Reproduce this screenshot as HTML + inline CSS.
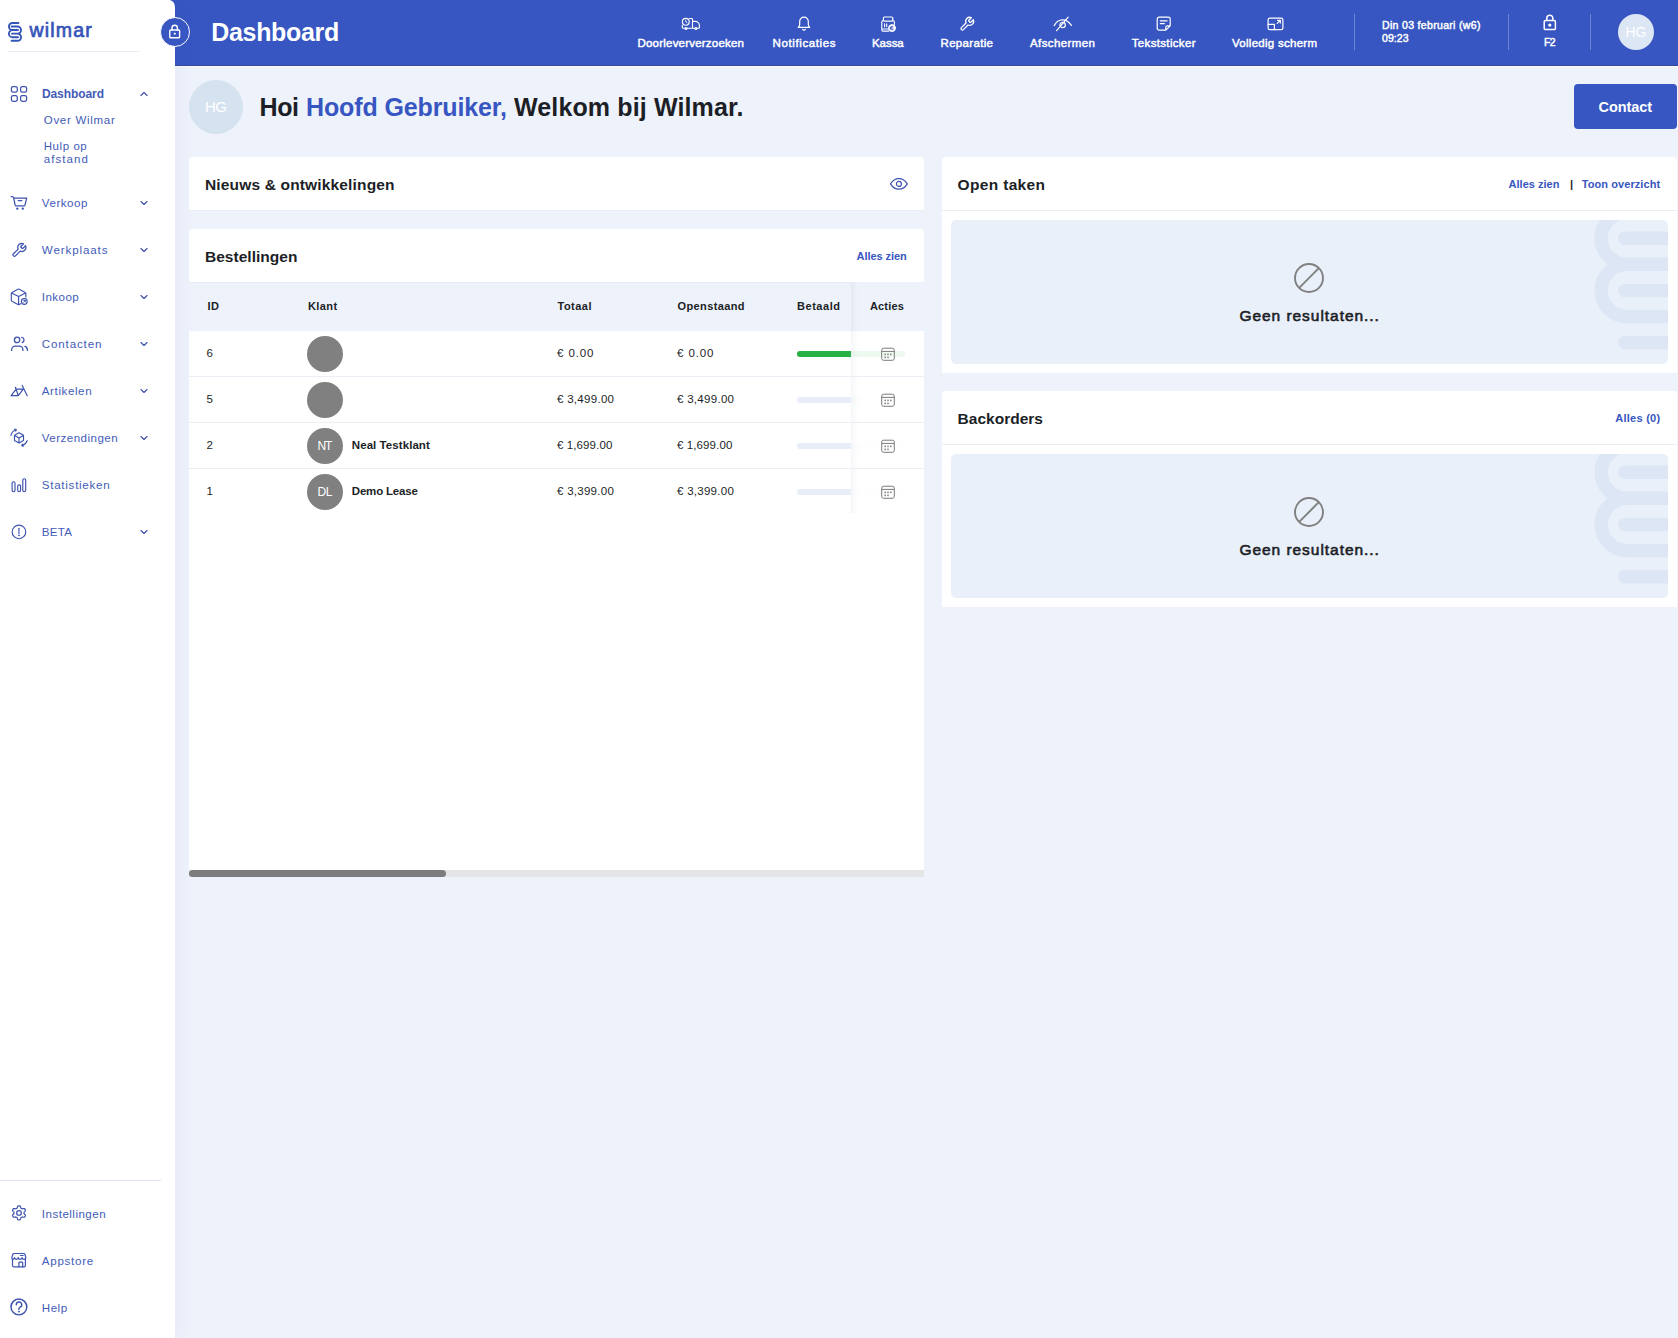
<!DOCTYPE html>
<html lang="nl">
<head>
<meta charset="utf-8">
<title>Dashboard - Wilmar</title>
<style>
*{box-sizing:border-box;margin:0;padding:0}
html,body{width:1678px;height:1338px;overflow:hidden;background:#eef2fb;font-family:"Liberation Sans",sans-serif;}
.t{position:absolute;white-space:nowrap;display:block}
svg{position:absolute;overflow:visible}
#sidebar,#header,#main{position:absolute;left:0;top:0;width:0;height:0}
.sb-bg{position:absolute;left:0;top:0;width:175px;height:1338px;background:#fff;border-top-right-radius:6px 7px;box-shadow:0 0 24px rgba(60,80,150,0.065)}
.hd-bg{position:absolute;left:170px;top:0;width:1508px;height:67px;background:#3756c1;border-bottom:1px solid #fafbff;box-shadow:inset 0 -1px 0 #364b9e}
.card{position:absolute;background:#fff;border-radius:4px 4px 0 0}
.abs{position:absolute}
.ico{fill:none;stroke:#3d53ae;stroke-width:1.2;stroke-linecap:round;stroke-linejoin:round}
.icw{fill:none;stroke:#fff;stroke-width:1.2;stroke-linecap:round;stroke-linejoin:round}
.sb{-webkit-text-stroke:0.45px currentColor}
.logo{-webkit-text-stroke:0.7px currentColor}
.sb2{-webkit-text-stroke:0.6px currentColor}

</style>
</head>
<body>
<main id="main">
<div class="abs" style="left:189px;top:80px;width:54px;height:54px;border-radius:50%;background:#d5e2ef"></div>
<span class="t" style="left:205.00px;top:97.17px;font-size:15px;line-height:20px;color:#fff;letter-spacing:-0.500px;">HG</span>
<span class="t" style="left:259.50px;top:91.19px;font-size:25px;line-height:32px;color:#1c1f26;font-weight:700;letter-spacing:-0.375px;">Hoi</span>
<span class="t" style="left:306.00px;top:91.19px;font-size:25px;line-height:32px;color:#3756c1;font-weight:700;letter-spacing:-0.121px;">Hoofd Gebruiker,</span>
<span class="t" style="left:514.00px;top:91.19px;font-size:25px;line-height:32px;color:#1c1f26;font-weight:700;letter-spacing:0.136px;">Welkom bij Wilmar.</span>
<div class="abs" style="left:1574px;top:84px;width:103px;height:45px;border-radius:4px;background:#3756c1"></div>
<span class="t" style="left:1598.50px;top:97.97px;font-size:14.5px;line-height:19px;color:#fff;font-weight:700;letter-spacing:-0.083px;">Contact</span>
<div class="card" style="left:189px;top:157px;width:735px;height:54px"></div>
<div class="abs" style="left:189px;top:210px;width:735px;height:1px;background:#e9edf4"></div>
<span class="t" style="left:205.00px;top:174.78px;font-size:15.5px;line-height:20px;color:#1c1f26;font-weight:700;letter-spacing:0.159px;">Nieuws &amp; ontwikkelingen</span>
<svg style="left:889px;top:177px" width="20" height="14" viewBox="0 0 20 14"><g class="ico" style="stroke-width:1.2"><path d="M1.500 6.900C3.600 3.400 6.500 1.600 9.900 1.600s6.300 1.800 8.400 5.300c-2.100 3.500-5 5.300-8.400 5.300S3.600 10.400 1.500 6.900z"/><circle cx="9.900" cy="6.900" r="2.500"/></g></svg>
<div class="card" style="left:189px;top:229px;width:735px;height:648px;border-bottom-left-radius:0;border-bottom-right-radius:0"></div>
<span class="t" style="left:205.00px;top:246.98px;font-size:15.5px;line-height:20px;color:#1c1f26;font-weight:700;letter-spacing:0.028px;">Bestellingen</span>
<span class="t" style="left:856.50px;top:249.38px;font-size:11px;line-height:14px;color:#3756c1;font-weight:700;letter-spacing:-0.056px;">Alles zien</span>
<div class="abs" style="left:189px;top:282px;width:735px;height:49px;background:#eef2fb;border-top:1px solid #e7ebf4"></div>
<span class="t" style="left:207.40px;top:299.43px;font-size:11px;line-height:14px;color:#1c1f26;font-weight:700;letter-spacing:0.600px;">ID</span>
<span class="t" style="left:307.90px;top:299.43px;font-size:11px;line-height:14px;color:#1c1f26;font-weight:700;letter-spacing:0.425px;">Klant</span>
<span class="t" style="left:557.50px;top:299.43px;font-size:11px;line-height:14px;color:#1c1f26;font-weight:700;letter-spacing:0.487px;">Totaal</span>
<span class="t" style="left:677.50px;top:299.43px;font-size:11px;line-height:14px;color:#1c1f26;font-weight:700;letter-spacing:0.382px;">Openstaand</span>
<span class="t" style="left:797.00px;top:299.43px;font-size:11px;line-height:14px;color:#1c1f26;font-weight:700;letter-spacing:0.542px;">Betaald</span>
<span class="t" style="left:206.60px;top:346.13px;font-size:11.5px;line-height:15px;color:#1c1f26;">6</span>
<div class="abs" style="left:307px;top:335.7px;width:36px;height:36px;border-radius:50%;background:#808080"></div>
<span class="t" style="left:557.00px;top:345.73px;font-size:11.5px;line-height:15px;color:#1c1f26;letter-spacing:0.900px;">€ 0.00</span>
<span class="t" style="left:677.00px;top:345.73px;font-size:11.5px;line-height:15px;color:#1c1f26;letter-spacing:0.900px;">€ 0.00</span>
<div class="abs" style="left:797px;top:350.7px;width:108px;height:6px;border-radius:3px;background:#28b045"></div>
<span class="t" style="left:206.60px;top:392.13px;font-size:11.5px;line-height:15px;color:#1c1f26;">5</span>
<div class="abs" style="left:307px;top:381.7px;width:36px;height:36px;border-radius:50%;background:#808080"></div>
<span class="t" style="left:557.00px;top:391.73px;font-size:11.5px;line-height:15px;color:#1c1f26;letter-spacing:0.292px;">€ 3,499.00</span>
<span class="t" style="left:677.00px;top:391.73px;font-size:11.5px;line-height:15px;color:#1c1f26;letter-spacing:0.292px;">€ 3,499.00</span>
<div class="abs" style="left:797px;top:396.7px;width:108px;height:6px;border-radius:3px;background:#e8eef8"></div>
<span class="t" style="left:206.60px;top:438.13px;font-size:11.5px;line-height:15px;color:#1c1f26;">2</span>
<div class="abs" style="left:307px;top:427.7px;width:36px;height:36px;border-radius:50%;background:#808080"></div>
<span class="t" style="left:317.40px;top:438.04px;font-size:12px;line-height:16px;color:#fff;letter-spacing:-1.100px;">NT</span>
<span class="t" style="left:351.80px;top:437.93px;font-size:11.5px;line-height:15px;color:#1c1f26;font-weight:700;letter-spacing:0.067px;">Neal Testklant</span>
<span class="t" style="left:557.00px;top:437.73px;font-size:11.5px;line-height:15px;color:#1c1f26;letter-spacing:0.103px;">€ 1,699.00</span>
<span class="t" style="left:677.00px;top:437.73px;font-size:11.5px;line-height:15px;color:#1c1f26;letter-spacing:0.103px;">€ 1,699.00</span>
<div class="abs" style="left:797px;top:442.7px;width:108px;height:6px;border-radius:3px;background:#e8eef8"></div>
<span class="t" style="left:206.60px;top:484.13px;font-size:11.5px;line-height:15px;color:#1c1f26;">1</span>
<div class="abs" style="left:307px;top:473.7px;width:36px;height:36px;border-radius:50%;background:#808080"></div>
<span class="t" style="left:317.40px;top:484.04px;font-size:12px;line-height:16px;color:#fff;letter-spacing:-0.412px;">DL</span>
<span class="t" style="left:351.80px;top:483.93px;font-size:11.5px;line-height:15px;color:#1c1f26;font-weight:700;letter-spacing:-0.194px;">Demo Lease</span>
<span class="t" style="left:557.00px;top:483.73px;font-size:11.5px;line-height:15px;color:#1c1f26;letter-spacing:0.269px;">€ 3,399.00</span>
<span class="t" style="left:677.00px;top:483.73px;font-size:11.5px;line-height:15px;color:#1c1f26;letter-spacing:0.269px;">€ 3,399.00</span>
<div class="abs" style="left:797px;top:488.7px;width:108px;height:6px;border-radius:3px;background:#e8eef8"></div>
<div class="abs" style="left:851px;top:282px;width:73px;height:49px;background:linear-gradient(90deg,rgba(40,60,110,0.05),rgba(40,60,110,0) 7px),#eef2fb"></div>
<div class="abs" style="left:851px;top:331px;width:73px;height:182px;background:linear-gradient(90deg,rgba(40,60,110,0.045),rgba(40,60,110,0) 7px),rgba(255,255,255,0.92)"></div>
<div class="abs" style="left:189px;top:376px;width:735px;height:1px;background:#ebeff5"></div>
<div class="abs" style="left:189px;top:422px;width:735px;height:1px;background:#ebeff5"></div>
<div class="abs" style="left:189px;top:468px;width:735px;height:1px;background:#ebeff5"></div>
<span class="t" style="left:870.00px;top:299.43px;font-size:11px;line-height:14px;color:#1c1f26;font-weight:700;letter-spacing:0.150px;">Acties</span>
<svg style="left:880.5px;top:346.9px" width="14" height="14" viewBox="0 0 14 14"><g fill="none" stroke="#7a7a7a" stroke-width="1"><rect x="0.7" y="1.2" width="12.6" height="12.1" rx="2"/><path d="M0.7 4.4h12.6"/></g><g fill="#8a8a8a"><rect x="3.4" y="6.6" width="1.6" height="1.6"/><rect x="6.2" y="6.6" width="1.6" height="1.6"/><rect x="9" y="6.6" width="1.6" height="1.6"/><rect x="3.4" y="9.6" width="1.6" height="1.6"/><rect x="6.2" y="9.6" width="1.6" height="1.6"/></g></svg>
<svg style="left:880.5px;top:392.9px" width="14" height="14" viewBox="0 0 14 14"><g fill="none" stroke="#7a7a7a" stroke-width="1"><rect x="0.7" y="1.2" width="12.6" height="12.1" rx="2"/><path d="M0.7 4.4h12.6"/></g><g fill="#8a8a8a"><rect x="3.4" y="6.6" width="1.6" height="1.6"/><rect x="6.2" y="6.6" width="1.6" height="1.6"/><rect x="9" y="6.6" width="1.6" height="1.6"/><rect x="3.4" y="9.6" width="1.6" height="1.6"/><rect x="6.2" y="9.6" width="1.6" height="1.6"/></g></svg>
<svg style="left:880.5px;top:438.9px" width="14" height="14" viewBox="0 0 14 14"><g fill="none" stroke="#7a7a7a" stroke-width="1"><rect x="0.7" y="1.2" width="12.6" height="12.1" rx="2"/><path d="M0.7 4.4h12.6"/></g><g fill="#8a8a8a"><rect x="3.4" y="6.6" width="1.6" height="1.6"/><rect x="6.2" y="6.6" width="1.6" height="1.6"/><rect x="9" y="6.6" width="1.6" height="1.6"/><rect x="3.4" y="9.6" width="1.6" height="1.6"/><rect x="6.2" y="9.6" width="1.6" height="1.6"/></g></svg>
<svg style="left:880.5px;top:484.9px" width="14" height="14" viewBox="0 0 14 14"><g fill="none" stroke="#7a7a7a" stroke-width="1"><rect x="0.7" y="1.2" width="12.6" height="12.1" rx="2"/><path d="M0.7 4.4h12.6"/></g><g fill="#8a8a8a"><rect x="3.4" y="6.6" width="1.6" height="1.6"/><rect x="6.2" y="6.6" width="1.6" height="1.6"/><rect x="9" y="6.6" width="1.6" height="1.6"/><rect x="3.4" y="9.6" width="1.6" height="1.6"/><rect x="6.2" y="9.6" width="1.6" height="1.6"/></g></svg>
<div class="abs" style="left:189px;top:870px;width:735px;height:7px;background:#e4e5e7"></div>
<div class="abs" style="left:189px;top:870px;width:257px;height:7px;border-radius:3.5px;background:#7d7d7d"></div>
<div class="card" style="left:942px;top:157px;width:735px;height:216px"></div>
<div class="abs" style="left:942px;top:210px;width:735px;height:1px;background:#e8ecf3"></div>
<span class="t" style="left:957.60px;top:174.78px;font-size:15.5px;line-height:20px;color:#1c1f26;font-weight:700;letter-spacing:0.329px;">Open taken</span>
<span class="t" style="left:1508.60px;top:177.43px;font-size:11px;line-height:14px;color:#3756c1;font-weight:700;letter-spacing:0.006px;">Alles zien</span>
<span class="t" style="left:1570.00px;top:177.43px;font-size:11px;line-height:14px;color:#1c1f26;font-weight:700;">|</span>
<span class="t" style="left:1581.70px;top:177.43px;font-size:11px;line-height:14px;color:#3756c1;font-weight:700;letter-spacing:0.082px;">Toon overzicht</span>
<div class="card" style="left:942px;top:391px;width:735px;height:216px"></div>
<div class="abs" style="left:942px;top:444px;width:735px;height:1px;background:#e8ecf3"></div>
<span class="t" style="left:957.60px;top:408.78px;font-size:15.5px;line-height:20px;color:#1c1f26;font-weight:700;letter-spacing:0.010px;">Backorders</span>
<span class="t" style="left:1615.20px;top:411.43px;font-size:11px;line-height:14px;color:#3756c1;font-weight:700;letter-spacing:0.273px;">Alles (0)</span>
<div class="abs empty" style="left:951px;top:220px;width:717px;height:144px;border-radius:5px;background:#e9f0f9;overflow:hidden"><svg style="left:0;top:0" width="717" height="144" viewBox="0 0 717 144"><g fill="none" stroke="#dce6f4" stroke-width="13.4" stroke-linecap="round"><path d="M740 -8H676.3a26.15 26.15 0 0 0 0 52.3H740M676.3 44.3a26.15 26.15 0 0 0 0 52.3H740"/><path d="M673.7 18.3H740M673.7 70.6H740M673.7 122.7H740"/></g></svg><svg style="left:343px;top:43px" width="30" height="30" viewBox="0 0 30 30"><g fill="none" stroke="#808080" stroke-width="1.9"><circle cx="15" cy="15" r="14"/><path d="M5.2 24.8 24.8 5.2"/></g></svg></div>
<span class="t sb2 sb" style="left:1239.40px;top:305.58px;font-size:15.5px;line-height:20px;color:#1c1f26;letter-spacing:0.960px;">Geen resultaten...</span>
<div class="abs empty" style="left:951px;top:454px;width:717px;height:144px;border-radius:5px;background:#e9f0f9;overflow:hidden"><svg style="left:0;top:0" width="717" height="144" viewBox="0 0 717 144"><g fill="none" stroke="#dce6f4" stroke-width="13.4" stroke-linecap="round"><path d="M740 -8H676.3a26.15 26.15 0 0 0 0 52.3H740M676.3 44.3a26.15 26.15 0 0 0 0 52.3H740"/><path d="M673.7 18.3H740M673.7 70.6H740M673.7 122.7H740"/></g></svg><svg style="left:343px;top:43px" width="30" height="30" viewBox="0 0 30 30"><g fill="none" stroke="#808080" stroke-width="1.9"><circle cx="15" cy="15" r="14"/><path d="M5.2 24.8 24.8 5.2"/></g></svg></div>
<span class="t sb2 sb" style="left:1239.40px;top:539.58px;font-size:15.5px;line-height:20px;color:#1c1f26;letter-spacing:0.960px;">Geen resultaten...</span>
</main>
<header id="header">
<div class="hd-bg"></div>
<span class="t" style="left:211.25px;top:16.29px;font-size:25px;line-height:32px;color:#fff;font-weight:700;letter-spacing:-0.320px;">Dashboard</span>
<span class="t sb" style="left:637.50px;top:35.93px;font-size:11.5px;line-height:15px;color:#fff;letter-spacing:0.210px;">Doorleververzoeken</span>
<span class="t sb" style="left:772.50px;top:35.93px;font-size:11.5px;line-height:15px;color:#fff;letter-spacing:0.614px;">Notificaties</span>
<span class="t sb" style="left:872.00px;top:35.93px;font-size:11.5px;line-height:15px;color:#fff;letter-spacing:-0.062px;">Kassa</span>
<span class="t sb" style="left:940.50px;top:35.93px;font-size:11.5px;line-height:15px;color:#fff;letter-spacing:0.328px;">Reparatie</span>
<span class="t sb" style="left:1030.00px;top:35.93px;font-size:11.5px;line-height:15px;color:#fff;letter-spacing:0.403px;">Afschermen</span>
<span class="t sb" style="left:1131.75px;top:35.93px;font-size:11.5px;line-height:15px;color:#fff;letter-spacing:0.335px;">Tekststicker</span>
<span class="t sb" style="left:1232.00px;top:35.93px;font-size:11.5px;line-height:15px;color:#fff;letter-spacing:0.272px;">Volledig scherm</span>
<div class="abs" style="left:1354px;top:14px;width:1px;height:36px;background:rgba(255,255,255,0.28)"></div>
<div class="abs" style="left:1508px;top:14px;width:1px;height:36px;background:rgba(255,255,255,0.28)"></div>
<div class="abs" style="left:1590px;top:14px;width:1px;height:36px;background:rgba(255,255,255,0.28)"></div>
<span class="t sb" style="left:1382.00px;top:18.32px;font-size:10.5px;line-height:14px;color:#fff;letter-spacing:0.327px;">Din 03 februari (w6)</span>
<span class="t sb" style="left:1382.00px;top:31.12px;font-size:10.5px;line-height:14px;color:#fff;letter-spacing:0.062px;">09:23</span>
<span class="t sb" style="left:1544.00px;top:35.32px;font-size:10.5px;line-height:14px;color:#fff;letter-spacing:-0.750px;">F2</span>
<div class="abs" style="left:1618px;top:14px;width:36px;height:36px;border-radius:50%;background:#dde6f5"></div>
<span class="t" style="left:1625.50px;top:23.46px;font-size:14px;line-height:18px;color:#fff;">HG</span>
<svg style="left:681px;top:17px" width="20" height="14" viewBox="0 0 20 14"><g class="icw" style="stroke-width:1.150"><circle cx="4.8" cy="4.8" r="3.4"/><path d="M4.800 3.100v1.900l1.200.600" style="stroke-width:.9"/><path d="M8.400 1.500H10.700a.8.8 0 0 1 .8.8V11.200M1.300 8.400V10.400a.8.8 0 0 0 .8.8H17.600a.8.8 0 0 0 .8-.8V8.600a4.300 4.300 0 0 0-4.300-4.300H11.500"/><circle cx="5" cy="11.500" r=".95" fill="#3756c1"/><circle cx="14.900" cy="11.500" r=".95" fill="#3756c1"/></g></svg>
<svg style="left:797px;top:16px" width="14" height="15" viewBox="0 0 14 15"><g class="icw"><path d="M7 1.1a4.3 4.3 0 0 1 4.3 4.3V8.6c0 1.2.6 2 1.5 2.8H1.200c.9-.8 1.5-1.600 1.500-2.800V5.400A4.300 4.300 0 0 1 7 1.100z"/><path d="M5.700 13.300a1.400 1.400 0 0 0 2.600 0"/></g></svg>
<svg style="left:881px;top:16px" width="16" height="16" viewBox="0 0 16 16"><g class="icw" style="stroke-width:1.150"><rect x="2.400" y="1" width="9.400" height="4.100" rx="1"/><path d="M2.400 4.200 .8 5.700V14a1.100 1.100 0 0 0 1.100 1.100H7.600M11.800 4.200l1.600 1.500V8.400M.8 13H7.300"/><path d="M3.600 7.700v3M5.700 7.700v3" style="stroke-width:1.100"/><circle cx="11" cy="12.100" r="3.500" fill="#fff" stroke="#fff" style="stroke-width:.9"/><path d="M12.300 10.700a1.900 1.900 0 1 0 0 2.800M9.300 11.700h2M9.300 12.600h2" style="stroke:#3756c1;stroke-width:.8"/></g></svg>
<svg style="left:959px;top:16.300px" width="16" height="16" viewBox="0 0 24 24"><path class="icw" style="stroke-width:1.950" d="M14.700 6.300a1 1 0 0 0 0 1.400l1.600 1.600a1 1 0 0 0 1.400 0l3.770-3.770a6 6 0 0 1-7.940 7.940l-6.910 6.910a2.120 2.120 0 0 1-3-3l6.910-6.910a6 6 0 0 1 7.940-7.940l-3.760 3.760z"/></svg>
<svg style="left:1053px;top:16px" width="20" height="16" viewBox="0 0 20 16"><g class="icw"><path d="M1.200 9.600C3.200 5.800 6.300 3.900 9.600 3.900c3.500 0 6.400 2 8.800 5.500"/><circle cx="9.600" cy="9" r="2.700"/><path d="M3.600 14.600 15.200 1.200"/></g></svg>
<svg style="left:1156px;top:15.9px" width="16" height="16" viewBox="0 0 16 16"><g class="icw"><path d="M9.800 14.200H3.200A2 2 0 0 1 1.200 12.200V3.200A2 2 0 0 1 3.200 1.200H12.200A2 2 0 0 1 14.200 3.200V9.800L9.800 14.200V11.300a1.500 1.500 0 0 1 1.500-1.500h2.900"/><path d="M4.300 4.800h6.800M4.300 7.600h4"/></g></svg>
<svg style="left:1266.5px;top:17px" width="17" height="14" viewBox="0 0 17 14"><g class="icw"><rect x="1.100" y="1.100" width="14.800" height="11.600" rx="1.800"/><path d="M1.100 7.400H7.400V12.700M10.200 6.400 13.300 3.400M10.600 3.400h2.700v2.700"/></g></svg>
<svg style="left:1543px;top:14px" width="14" height="17" viewBox="0 0 14 17"><g class="icw" style="stroke-width:1.500"><rect x="1.200" y="6.600" width="11.200" height="9" rx="1.200"/><path d="M3.800 6.600V4.200a3 3 0 0 1 6 0V6.600"/><circle cx="6.800" cy="11.100" r=".9" fill="#fff"/></g></svg>
</header>
<nav id="sidebar">
<div class="sb-bg"></div>
<svg style="left:8px;top:22px" width="14" height="20" viewBox="0 0 14 20"><g fill="none" stroke="#3554b8" stroke-width="1.9" stroke-linecap="round"><path d="M10.4 .95H4.5a3.56 3.56 0 0 0 0 7.12H10M4.5 8.07a3.56 3.56 0 0 0 0 7.12H10"/><path d="M3.600 4.510H9.500a3.560 3.560 0 0 1 0 7.120H4M9.500 11.630a3.560 3.560 0 0 1 0 7.120H3.600"/></g></svg>
<span class="t logo sb" style="left:29.56px;top:17.52px;font-size:19.5px;line-height:25px;color:#3554b8;letter-spacing:1.185px;">wilmar</span>
<div class="abs" style="left:8px;top:51px;width:131px;height:1px;background:#e9edf5"></div>
<span class="t" style="left:41.90px;top:85.89px;font-size:12px;line-height:16px;color:#435cb8;font-weight:700;letter-spacing:-0.073px;">Dashboard</span>
<svg style="left:140px;top:90.5px" width="8" height="6" viewBox="0 0 8 6"><path class="ico" style="stroke-width:1.150" d="M1 4.500 4 1.500 7 4.500"/></svg>
<span class="t" style="left:43.75px;top:112.63px;font-size:11.5px;line-height:15px;color:#435cb8;letter-spacing:0.713px;">Over Wilmar</span>
<span class="t" style="left:43.75px;top:139.03px;font-size:11.5px;line-height:15px;color:#435cb8;letter-spacing:0.562px;">Hulp op</span>
<span class="t" style="left:43.75px;top:152.03px;font-size:11.5px;line-height:15px;color:#435cb8;letter-spacing:1.083px;">afstand</span>
<span class="t" style="left:41.80px;top:195.43px;font-size:11.6px;line-height:15px;color:#435cb8;letter-spacing:0.527px;">Verkoop</span>
<svg style="left:140px;top:199.5px" width="8" height="6" viewBox="0 0 8 6"><path class="ico" style="stroke-width:1.150" d="M1 1.500 4 4.500 7 1.500"/></svg>
<span class="t" style="left:41.80px;top:242.43px;font-size:11.6px;line-height:15px;color:#435cb8;letter-spacing:0.875px;">Werkplaats</span>
<svg style="left:140px;top:246.5px" width="8" height="6" viewBox="0 0 8 6"><path class="ico" style="stroke-width:1.150" d="M1 1.500 4 4.500 7 1.500"/></svg>
<span class="t" style="left:41.80px;top:289.43px;font-size:11.6px;line-height:15px;color:#435cb8;letter-spacing:0.422px;">Inkoop</span>
<svg style="left:140px;top:293.5px" width="8" height="6" viewBox="0 0 8 6"><path class="ico" style="stroke-width:1.150" d="M1 1.500 4 4.500 7 1.500"/></svg>
<span class="t" style="left:41.80px;top:336.43px;font-size:11.6px;line-height:15px;color:#435cb8;letter-spacing:0.845px;">Contacten</span>
<svg style="left:140px;top:340.5px" width="8" height="6" viewBox="0 0 8 6"><path class="ico" style="stroke-width:1.150" d="M1 1.500 4 4.500 7 1.500"/></svg>
<span class="t" style="left:41.80px;top:383.43px;font-size:11.6px;line-height:15px;color:#435cb8;letter-spacing:0.588px;">Artikelen</span>
<svg style="left:140px;top:387.5px" width="8" height="6" viewBox="0 0 8 6"><path class="ico" style="stroke-width:1.150" d="M1 1.500 4 4.500 7 1.500"/></svg>
<span class="t" style="left:41.80px;top:430.43px;font-size:11.6px;line-height:15px;color:#435cb8;letter-spacing:0.450px;">Verzendingen</span>
<svg style="left:140px;top:434.5px" width="8" height="6" viewBox="0 0 8 6"><path class="ico" style="stroke-width:1.150" d="M1 1.500 4 4.500 7 1.500"/></svg>
<span class="t" style="left:41.80px;top:477.43px;font-size:11.6px;line-height:15px;color:#435cb8;letter-spacing:0.723px;">Statistieken</span>
<span class="t" style="left:41.80px;top:524.43px;font-size:11.6px;line-height:15px;color:#435cb8;letter-spacing:0.275px;">BETA</span>
<svg style="left:140px;top:528.5px" width="8" height="6" viewBox="0 0 8 6"><path class="ico" style="stroke-width:1.150" d="M1 1.500 4 4.500 7 1.500"/></svg>
<div class="abs" style="left:0;top:1180px;width:161px;height:1px;background:#dfe3ee"></div>
<span class="t" style="left:41.80px;top:1205.93px;font-size:11.6px;line-height:15px;color:#435cb8;letter-spacing:0.473px;">Instellingen</span>
<span class="t" style="left:41.80px;top:1252.93px;font-size:11.6px;line-height:15px;color:#435cb8;letter-spacing:0.707px;">Appstore</span>
<span class="t" style="left:41.80px;top:1299.68px;font-size:11.6px;line-height:15px;color:#435cb8;letter-spacing:0.483px;">Help</span>
<div class="abs" style="left:160px;top:17px;width:30.2px;height:30.2px;border-radius:50%;background:#3756c1;border:1px solid #fff"></div>
<svg style="left:168px;top:24px" width="14" height="16" viewBox="0 0 14 16"><g class="icw" style="stroke-width:1.4"><rect x="1.8" y="6" width="9.800" height="7.800" rx=".8"/><path d="M4 6V4a2.700 2.700 0 0 1 5.400 0V6"/><circle cx="6.700" cy="9.700" r=".8" fill="#fff" style="stroke-width:.5"/></g></svg>
<svg style="left:10px;top:85px" width="18" height="18" viewBox="0 0 18 18"><g class="ico" style="stroke-width:1.25"><rect x="1.4" y="1.5" width="5.900" height="5.600" rx="1.700"/><rect x="10.600" y="1.500" width="6" height="5.600" rx="1.700"/><rect x="1.400" y="10.600" width="5.900" height="5.700" rx="1.700"/><rect x="10.600" y="10.600" width="6" height="5.700" rx="1.700"/></g></svg>
<svg style="left:10px;top:195px" width="18" height="16" viewBox="0 0 18 16"><g class="ico" style="stroke-width:1.25"><path d="M1.100 1.500h1.100c.8 0 1.300.5 1.400 1.200l.1.500 1.400 6.600c.1.700.6 1.100 1.300 1.100h7.300c.7 0 1.200-.4 1.300-1.100L16.700 3.200H3.700M8.200 5.500h3.700"/><circle cx="7.300" cy="13.600" r=".55" fill="#3f58b5"/><circle cx="12.800" cy="13.600" r=".55" fill="#3f58b5"/></g></svg>
<svg style="left:10.500px;top:242px" width="16.300" height="16.300" viewBox="0 0 24 24"><path class="ico" style="stroke-width:1.850" d="M14.700 6.300a1 1 0 0 0 0 1.400l1.600 1.600a1 1 0 0 0 1.400 0l3.770-3.770a6 6 0 0 1-7.940 7.940l-6.910 6.910a2.120 2.120 0 0 1-3-3l6.910-6.910a6 6 0 0 1 7.940-7.940l-3.760 3.760z"/></svg>
<svg style="left:10px;top:288px" width="19" height="18" viewBox="0 0 19 18"><g class="ico" style="stroke-width:1.15"><path d="M15.900 9V5.600a1.300 1.300 0 0 0-.7-1.150L9.250 1.150a1.300 1.300 0 0 0-1.300 0L2 4.450A1.300 1.300 0 0 0 1.300 5.600v6.400A1.300 1.300 0 0 0 2 13.150l5.950 3.300a1.300 1.300 0 0 0 1.300 0l1.500-.8M1.600 4.900 8.600 8.600l7-3.700M8.600 8.600v8"/><circle cx="14.300" cy="13.500" r="2.900" fill="#fff"/><path d="M13.400 14.400l1.900-1.900M13.900 12.500h1.400v1.400" style="stroke-width:.9"/></g></svg>
<svg style="left:10px;top:336px" width="19" height="16" viewBox="0 0 19 16"><g class="ico" style="stroke-width:1.3"><circle cx="7.100" cy="3.900" r="2.700"/><path d="M11.700 1.300a2.750 2.750 0 0 1 .5 5.300M1.700 14.400v-.7a3.500 3.500 0 0 1 3.500-3.500h4.200a3.500 3.500 0 0 1 3.500 3.500v.7M14.900 10.400a3.500 3.500 0 0 1 2.500 3.300v.7"/></g></svg>
<svg style="left:10px;top:384px" width="19" height="13" viewBox="0 0 19 13"><g class="ico" style="stroke-width:1.2"><path d="M1.100 11.700 6.200 5.200H13.300M1.100 11.700H8.200L13.100 5.400M5.400 3.300 8.200 11.500M12.200 1.400l5 10.300"/></g></svg>
<svg style="left:10px;top:428px" width="19" height="19" viewBox="0 0 19 19"><g class="ico" style="stroke-width:1.15"><path d="M9 4.700 13.500 7.300V12.500L9 15.100 4.500 12.500V7.300ZM4.700 7.400 9 9.900l4.300-2.500M9 9.900V15"/><path d="M0.900 7.400A8.600 8.600 0 0 1 6.200 1.500M4.600 1.100l1.700.4-.5 1.600M17.200 12.700a8.600 8.600 0 0 1-5.400 5.000M13.400 18.200l-1.700-.5.600-1.600"/></g></svg>
<svg style="left:11px;top:477px" width="16" height="16" viewBox="0 0 16 16"><g class="ico" style="stroke-width:1.15"><rect x="1.100" y="4.700" width="2.900" height="10" rx="1.400"/><rect x="6.700" y="7.900" width="2.900" height="6.800" rx="1.400"/><rect x="11.800" y="1.700" width="2.900" height="13" rx="1.400"/></g></svg>
<svg style="left:11px;top:524px" width="16" height="16" viewBox="0 0 16 16"><g class="ico" style="stroke-width:1.15"><circle cx="7.950" cy="7.900" r="6.800"/><path d="M7.950 4.300v5.400"/><circle cx="7.950" cy="11.500" r=".5" fill="#3f58b5" style="stroke-width:.6"/></g></svg>
<svg style="left:10px;top:1204px" width="18" height="18" viewBox="0 0 18 18"><g class="ico" style="stroke-width:1.2"><path d="M14.10 8.90 14.09 9.17 14.07 9.43 14.09 9.71 14.46 10.06 14.84 10.47 15.20 10.91 15.48 11.39 15.39 11.75 15.24 12.08 15.06 12.40 14.87 12.71 14.66 13.01 14.40 13.27 13.85 13.26 13.28 13.18 12.73 13.05 12.25 12.91 12.00 13.03 11.78 13.18 11.55 13.32 11.32 13.44 11.07 13.56 10.85 13.71 10.72 14.21 10.57 14.74 10.36 15.28 10.09 15.76 9.73 15.86 9.37 15.89 9.00 15.90 8.63 15.89 8.27 15.86 7.91 15.76 7.64 15.28 7.43 14.74 7.28 14.21 7.15 13.71 6.93 13.56 6.68 13.44 6.45 13.32 6.22 13.18 6.00 13.03 5.75 12.91 5.27 13.05 4.72 13.18 4.15 13.26 3.60 13.27 3.34 13.01 3.13 12.71 2.94 12.40 2.76 12.08 2.61 11.75 2.52 11.39 2.80 10.91 3.16 10.47 3.54 10.06 3.91 9.71 3.93 9.43 3.91 9.17 3.90 8.90 3.91 8.63 3.93 8.37 3.91 8.09 3.54 7.74 3.16 7.33 2.80 6.89 2.52 6.41 2.61 6.05 2.76 5.72 2.94 5.40 3.13 5.09 3.34 4.79 3.60 4.53 4.15 4.54 4.72 4.62 5.27 4.75 5.75 4.89 6.00 4.77 6.22 4.62 6.45 4.48 6.68 4.36 6.93 4.24 7.15 4.09 7.28 3.59 7.43 3.06 7.64 2.52 7.91 2.04 8.27 1.94 8.63 1.91 9.00 1.90 9.37 1.91 9.73 1.94 10.09 2.04 10.36 2.52 10.57 3.06 10.72 3.59 10.85 4.09 11.07 4.24 11.32 4.36 11.55 4.48 11.78 4.62 12.00 4.77 12.25 4.89 12.73 4.75 13.28 4.62 13.85 4.54 14.40 4.53 14.66 4.79 14.87 5.09 15.06 5.40 15.24 5.72 15.39 6.05 15.48 6.41 15.20 6.89 14.84 7.33 14.46 7.74 14.09 8.09 14.07 8.37 14.09 8.63Z"/><circle cx="9" cy="8.900" r="2.350"/></g></svg>
<svg style="left:11px;top:1252px" width="16" height="16" viewBox="0 0 16 16"><g class="ico" style="stroke-width:1.2"><path d="M1.500 7v6.600a1.200 1.200 0 0 0 1.200 1.200h10.500a1.200 1.200 0 0 0 1.200-1.200V7"/><path d="M2.900 1.500h9.900c.5 0 .9.300 1 .8L14.900 5.600c0 1-.9 1.750-1.900 1.750s-1.900-.75-1.900-1.750c0 1-.9 1.750-1.900 1.750S7.300 6.600 7.300 5.600c0 1-.9 1.750-1.900 1.750S3.500 6.600 3.500 5.600c0 1-.9 1.750-1.750 1.750C1.300 7.350.8 6.600.8 5.600L1.900 2.300c.1-.5.500-.8 1-.8z"/><path d="M7.900 14.800V10.900a.8.800 0 0 1 .8-.8h2.200a.8.800 0 0 1 .8.800v3.900M9.400 3.500h2.800" /> </g></svg>
<svg style="left:10px;top:1298px" width="18" height="18" viewBox="0 0 18 18"><g class="ico" style="stroke-width:1.45"><circle cx="8.900" cy="8.950" r="7.900"/><path d="M6.300 6.700a2.700 2.700 0 1 1 3.900 2.400c-.8.500-1.300 1-1.300 1.900v.6"/><circle cx="8.900" cy="13.700" r=".55" fill="#3f58b5" style="stroke-width:.7"/></g></svg>
</nav>
</body>
</html>
